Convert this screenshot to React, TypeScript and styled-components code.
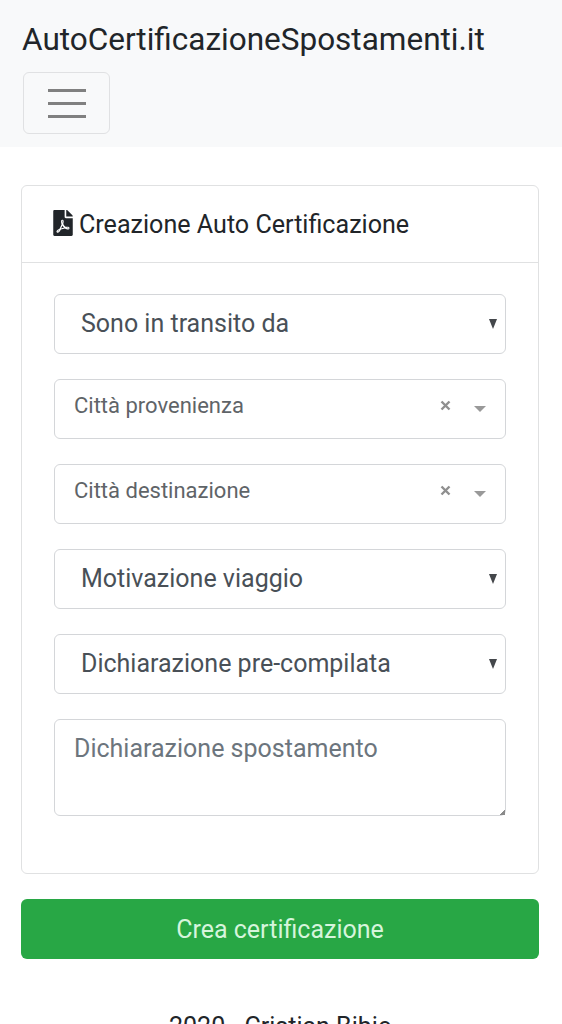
import React from 'react';
import styled, { createGlobalStyle } from 'styled-components';
import { FaFilePdf } from 'react-icons/fa';

const GlobalStyle = createGlobalStyle`
  html, body {
    margin: 0;
    padding: 0;
    height: 1024px;
    overflow: hidden;
    background: #fff;
  }
  * {
    box-sizing: border-box;
  }
  body {
    font-family: Roboto, "Liberation Sans", sans-serif;
    color: #212529;
  }
`;

const Navbar = styled.nav`
  height: 147px;
  background: #f8f9fa;
  padding: 17px 22px 13px 23px;
  display: flex;
  flex-direction: column;
`;

const Brand = styled.a`
  font-size: 31.5px;
  line-height: 46px;
  height: 55px;
  margin-left: -1px;
  color: #212529;
`;

const Toggler = styled.button`
  width: 87px;
  height: 62px;
  background: transparent;
  border: 1.5px solid #e0e1e3;
  border-radius: 6px;
  display: flex;
  flex-direction: column;
  justify-content: center;
  align-items: center;
  gap: 10px;
  padding: 0;
`;

const TogglerBar = styled.span`
  width: 38px;
  height: 3px;
  background: #808080;
`;

const Main = styled.main`
  padding: 38px 23px 0 21px;
`;

const Card = styled.section`
  height: 689px;
  border: 1.5px solid #e0e1e2;
  border-radius: 6px;
  background: #fff;
`;

const CardHeader = styled.header`
  height: 77px;
  padding: 0 0 0 31px;
  border-bottom: 1.5px solid #e0e1e2;
  display: flex;
  align-items: center;
  gap: 6px;
  font-size: 25.1px;
  color: #212529;
  svg {
    width: 20px;
    height: 26px;
    margin-top: -2px;
  }
`;

const CardBody = styled.div`
  padding: 31px 32px 0;
  display: flex;
  flex-direction: column;
  gap: 25.5px;
`;

const Field = styled.div`
  height: 59.5px;
  border: 1.5px solid #d4d6d9;
  border-radius: 6px;
  background: #fff;
  display: flex;
  align-items: center;
  color: #495057;
`;

const SelectLabel = styled.span`
  flex: 1;
  padding-left: 26px;
  font-size: 25px;
`;

const NativeArrow = styled.span`
  width: 0;
  height: 0;
  margin-right: 8px;
  border-left: 4.5px solid transparent;
  border-right: 4.5px solid transparent;
  border-top: 10px solid #44474b;
`;

const ComboLabel = styled.span`
  flex: 1;
  padding: 0 0 7px 19px;
  font-size: 22px;
  color: #5f6468;
`;

const ClearIcon = styled.svg`
  width: 11px;
  height: 11px;
  margin: 0 23px 6px 0;
`;

const ComboArrow = styled.span`
  width: 0;
  height: 0;
  margin: 1px 19px 0 0;
  border-left: 6px solid transparent;
  border-right: 6px solid transparent;
  border-top: 6px solid #999;
`;

const TextArea = styled.textarea`
  display: block;
  width: 100%;
  height: 96.5px;
  padding: 13px 19px;
  border: 1.5px solid #d4d6d9;
  border-radius: 6px;
  outline: none;
  font-family: inherit;
  font-size: 25px;
  line-height: 32px;
  color: #495057;
  &::placeholder {
    color: #6c757d;
    opacity: 1;
  }
  &::-webkit-resizer {
    background: linear-gradient(135deg, transparent 82%, #8a8a8a 82%);
  }
`;

const SubmitButton = styled.button`
  display: block;
  width: 100%;
  height: 60px;
  margin-top: 25px;
  border: none;
  border-radius: 6px;
  background: #28a745;
  color: #d6f5dc;
  font-family: inherit;
  font-size: 25px;
`;

const Footer = styled.footer`
  margin-top: 52px;
  text-align: center;
  font-size: 25px;
  line-height: 32px;
  color: #212529;
`;

const SelectField = ({ label }: { label: string }) => (
  <Field>
    <SelectLabel>{label}</SelectLabel>
    <NativeArrow />
  </Field>
);

const ComboField = ({ label }: { label: string }) => (
  <Field>
    <ComboLabel>{label}</ComboLabel>
    <ClearIcon viewBox="0 0 11 11">
      <path d="M1.5 1.5l8 8M9.5 1.5l-8 8" stroke="#8f8f8f" strokeWidth="2.4" />
    </ClearIcon>
    <ComboArrow />
  </Field>
);

const App = () => (
  <>
    <GlobalStyle />
    <Navbar>
      <Brand>AutoCertificazioneSpostamenti.it</Brand>
      <Toggler aria-label="menu">
        <TogglerBar />
        <TogglerBar />
        <TogglerBar />
      </Toggler>
    </Navbar>
    <Main>
      <Card>
        <CardHeader>
          <FaFilePdf />
          Creazione Auto Certificazione
        </CardHeader>
        <CardBody>
          <SelectField label="Sono in transito da" />
          <ComboField label="Città provenienza" />
          <ComboField label="Città destinazione" />
          <SelectField label="Motivazione viaggio" />
          <SelectField label="Dichiarazione pre-compilata" />
          <TextArea placeholder="Dichiarazione spostamento" />
        </CardBody>
      </Card>
      <SubmitButton>Crea certificazione</SubmitButton>
      <Footer>2020 - Cristian Bibic</Footer>
    </Main>
  </>
);

export default App;
